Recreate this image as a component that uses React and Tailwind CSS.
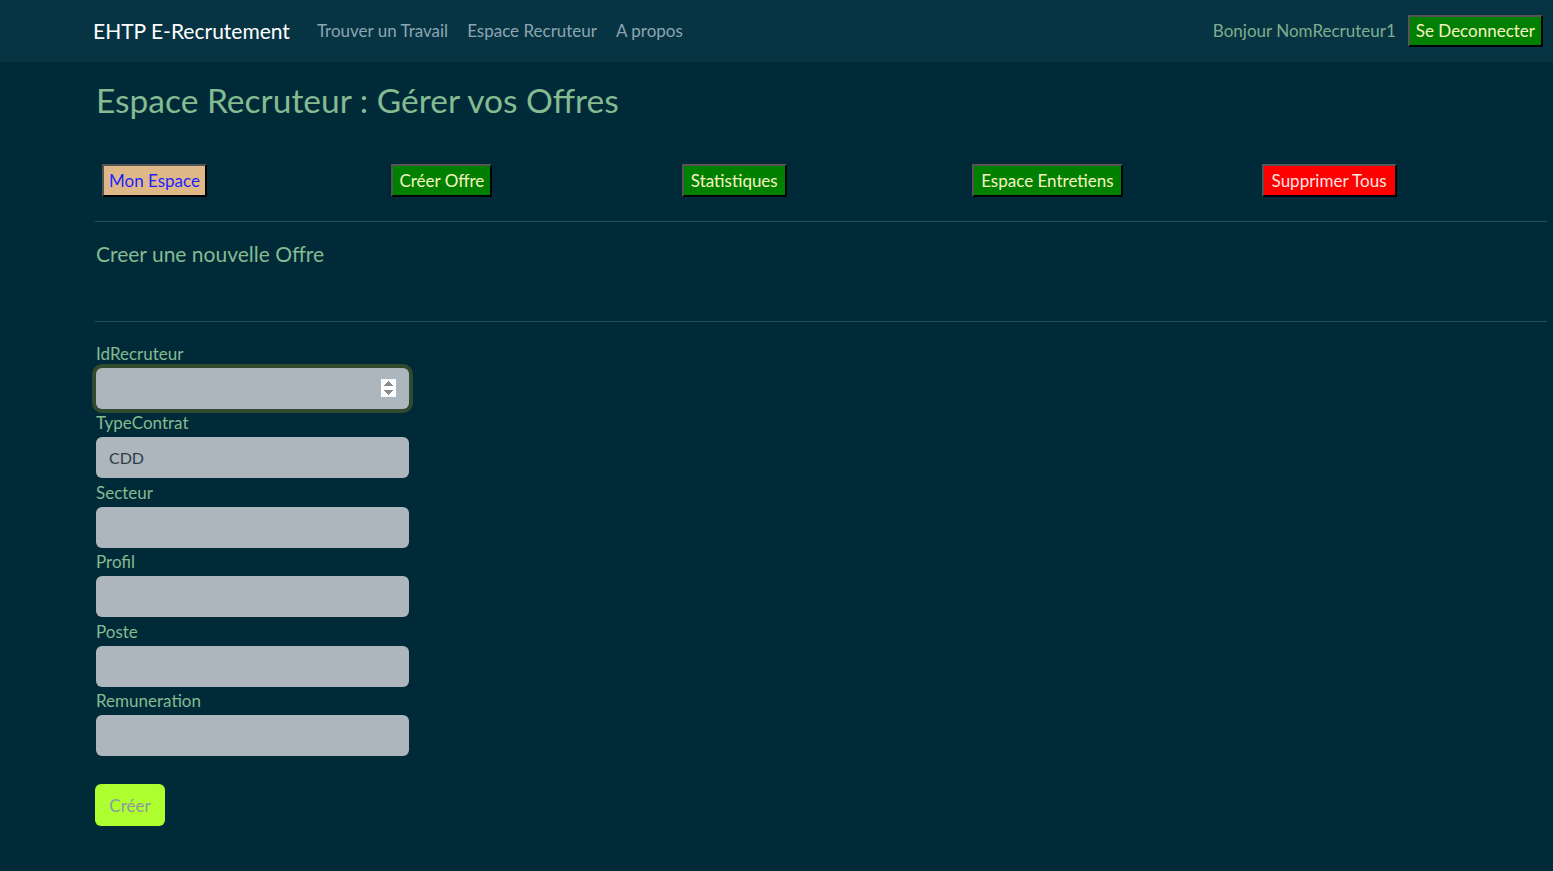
import { useState } from "react";

const fields = ["TypeContrat", "Secteur", "Profil", "Poste", "Remuneration"];

const btn =
  "h-[33px] px-[7px] text-[17px] border-2 border-t-[#555] border-l-[#555] border-r-black border-b-black";

export default function App() {
  const [values, setValues] = useState({ TypeContrat: "CDD" });

  return (
    <div className="min-h-[871px] bg-[#012a39] font-['Lato',sans-serif]">
      {/* Navbar */}
      <nav className="h-[62px] bg-[#073443] flex items-center justify-between pl-[93px] pr-[10px]">
        <div className="flex items-center">
          <span className="text-white text-[21px] mr-[27px]">EHTP E-Recrutement</span>
          <a className="text-[#8ba6b1] text-[17px] mr-[19px]">Trouver un Travail</a>
          <a className="text-[#8ba6b1] text-[17px] mr-[19px]">Espace Recruteur</a>
          <a className="text-[#8ba6b1] text-[17px]">A propos</a>
        </div>
        <div className="flex items-center">
          <span className="text-[#7fae8f] text-[17px] mr-[12px]">Bonjour NomRecruteur1</span>
          <button className="h-[32px] px-[6px] bg-[#008000] text-[#f7f3c4] text-[17px] border-2 border-t-[#555] border-l-[#555] border-r-black border-b-black">
            Se Deconnecter
          </button>
        </div>
      </nav>

      {/* Content */}
      <div className="pl-[95px] pr-[6px]">
        <h1 className="text-[#84bb90] text-[33.5px] pt-[15px] leading-[46px] pl-[1px]">
          Espace Recruteur : Gérer vos Offres
        </h1>

        <div className="grid grid-cols-5 mt-[41px]">
          <div className="pl-[7px]">
            <button className={`${btn} bg-[#deb887] text-[#1f1fff] !px-[5px]`}>Mon Espace</button>
          </div>
          <div className="pl-[6px]">
            <button className={`${btn} bg-[#008000] text-[#f7f3c4] !px-[6px]`}>Créer Offre</button>
          </div>
          <div className="pl-[6px]">
            <button className={`${btn} bg-[#008000] text-[#f7f3c4]`}>Statistiques</button>
          </div>
          <div className="pl-[6px]">
            <button className={`${btn} bg-[#008000] text-[#f7f3c4]`}>Espace Entretiens</button>
          </div>
          <div className="pl-[5px]">
            <button className={`${btn} bg-[#ff0000] text-[#fde3e3] !px-[8px]`}>Supprimer Tous</button>
          </div>
        </div>

        <hr className="mt-[24px] border-t border-[#24505a]" />
        <h4 className="text-[#84bb90] text-[21px] leading-[30px] pt-[17px] pl-[1px] h-[99px]">
          Creer une nouvelle Offre
        </h4>
        <hr className="border-t border-[#24505a]" />

        <form className="pt-[20px] w-[314px] pl-[1px]">
          <label className="block text-[#84bb90] text-[17px] leading-[24px] mb-[2px]">IdRecruteur</label>
          <input
            type="number"
            autoFocus
            className="block w-full h-[41px] px-[13px] rounded-[6px] bg-[#adb5bd] text-[#333] outline-none ring-4 ring-[#2f4a2c] mb-[2.4px]"
          />
          {fields.map((f) => (
            <div key={f}>
              <label className="block text-[#84bb90] text-[17px] leading-[24px] mb-[2px]">{f}</label>
              <input
                type="text"
                value={values[f] || ""}
                onChange={(e) => setValues({ ...values, [f]: e.target.value })}
                className="block w-full h-[41px] px-[13px] rounded-[6px] bg-[#adb5bd] text-[#2b3d48] text-[16px] outline-none mb-[2.4px]"
              />
            </div>
          ))}
          <button
            type="button"
            className="mt-[26px] -ml-[1px] h-[42px] w-[70px] rounded-[6px] bg-[#adff2f] text-[#8d9aa0] text-[17px]"
          >
            Créer
          </button>
        </form>
      </div>
    </div>
  );
}
